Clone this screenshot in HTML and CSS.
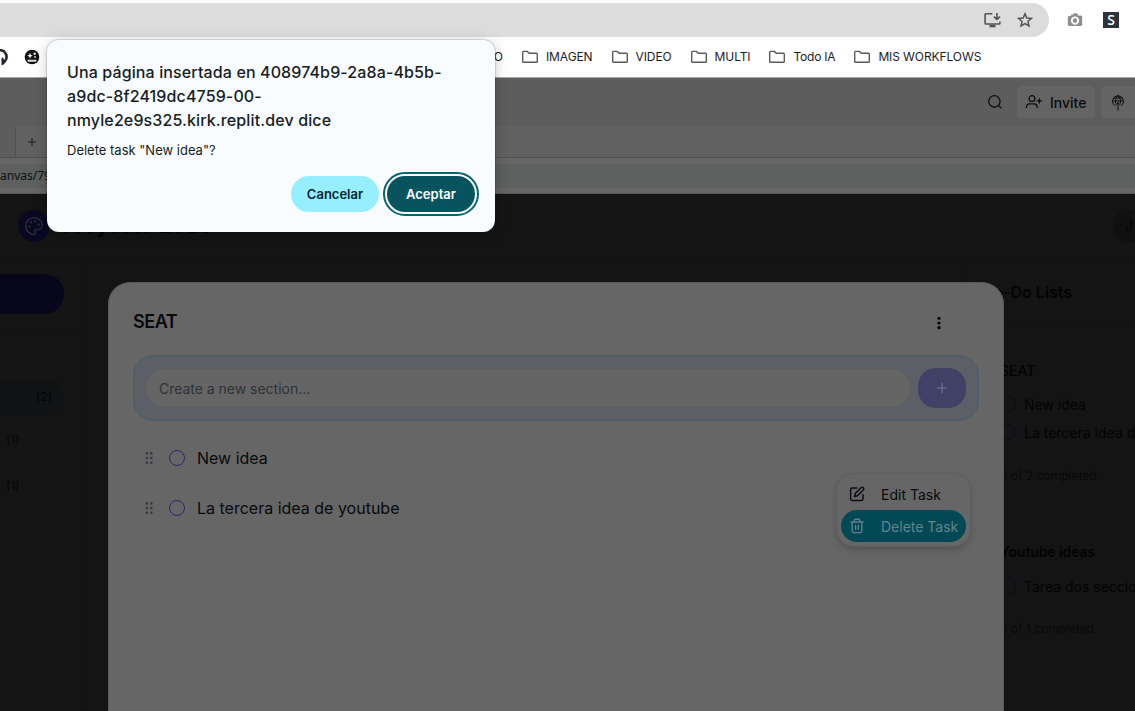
FILE: index.html
```html
<!DOCTYPE html>
<html lang="es">
<head>
<meta charset="utf-8">
<title>Canvas</title>
<link rel="stylesheet" href="styles.css">
</head>
<body>
<svg class="defs" width="0" height="0">
  <symbol id="folder" viewBox="0 0 18 14"><path d="M1.7 2.2Q1.7 1.4 2.5 1.4H6.4L8.2 3.2H15.5Q16.3 3.2 16.3 4V11.5Q16.3 12.3 15.5 12.3H2.5Q1.7 12.3 1.7 11.5Z" fill="none" stroke="#5a5a5a" stroke-width="1.4"/></symbol>
  <symbol id="grip" viewBox="0 0 8 14"><g fill="#363a44"><circle cx="1.9" cy="2.4" r="1.3"/><circle cx="6.3" cy="2.4" r="1.3"/><circle cx="1.9" cy="7.1" r="1.3"/><circle cx="6.3" cy="7.1" r="1.3"/><circle cx="1.9" cy="11.8" r="1.3"/><circle cx="6.3" cy="11.8" r="1.3"/></g></symbol>
</svg>

<div class="toolbar">
  <div class="omnibox">
    <svg width="18" height="16" viewBox="0 0 18 16" fill="none" stroke="#505357" stroke-width="1.6"><path d="M9.3 1.8H2.9Q2.1 1.8 2.1 2.6V11.2Q2.1 12 2.9 12H16.1Q16.9 12 16.9 11.2V9.5"/><path d="M6.5 14H12.5" stroke-width="2.6"/><path d="M13.9 1V7.2M10.9 4.6L13.9 7.5L16.9 4.6"/></svg>
    <svg width="16" height="16" viewBox="0 0 16 16" fill="none" stroke="#505357" stroke-width="1.5"><path d="M8 1.8L9.8 6L14.4 6.4L10.9 9.4L12 13.9L8 11.5L4 13.9L5.1 9.4L1.6 6.4L6.2 6Z"/></svg>
  </div>
  <svg class="ic-camera" width="16" height="14" viewBox="0 0 16 14"><path d="M2 3H4V1.6H6L7 .2H10.2L11.2 2.4H13.6Q15.2 2.4 15.2 4V11.6Q15.2 13 13.8 13H2.2Q.8 13 .8 11.6V4.2Q.8 3 2 3Z" fill="#8f8f8f"/><circle cx="8" cy="7.6" r="3.2" fill="none" stroke="#fff" stroke-width="1.9"/></svg>
  <span class="ext-s">S</span>
</div>

<div class="bookmarks">
  <svg class="ic-github" width="16" height="16" viewBox="0 0 16 16" fill="none" stroke="#24292f" stroke-width="2.6"><path d="M4 2Q8 0 12 2.4Q15.6 6 14.2 10Q13 12.8 10.8 14.4V11Q10.4 9.6 9.6 9.4"/></svg>
  <svg class="ic-face" width="16" height="16" viewBox="0 0 16 16"><circle cx="8" cy="8" r="7.3" fill="#111"/><path d="M6 3.8L6.8 6L9 6.8L6.8 7.6L6 9.8L5.2 7.6L3 6.8L5.2 6Z" fill="#fff"/><circle cx="10.7" cy="4.8" r="1.3" fill="#ddd"/><circle cx="11" cy="8" r="1.1" fill="#bbb"/><path d="M3.2 10.7H12.8L12 12.8H4Z" fill="#ddd"/></svg>
  <span class="bm-cut">AUDIO</span>
  <span class="bm"><svg width="18" height="14"><use href="#folder"/></svg><span>IMAGEN</span></span>
  <span class="bm"><svg width="18" height="14"><use href="#folder"/></svg><span>VIDEO</span></span>
  <span class="bm"><svg width="18" height="14"><use href="#folder"/></svg><span>MULTI</span></span>
  <span class="bm"><svg width="18" height="14"><use href="#folder"/></svg><span class="bm-todo">Todo IA</span></span>
  <span class="bm"><svg width="18" height="14"><use href="#folder"/></svg><span>MIS WORKFLOWS</span></span>
</div>

<div class="ide-head">
  <svg width="16" height="16" viewBox="0 0 16 16" fill="none" stroke="#0c0c0c" stroke-width="1.2"><circle cx="7.4" cy="7.4" r="5.7"/><path d="M11.5 11.5L14.4 14.4"/></svg>
  <div class="invite"><svg width="18" height="16" viewBox="0 0 18 16" fill="none" stroke="#0c0c0c" stroke-width="1.2"><circle cx="7" cy="4.6" r="2.9"/><path d="M1.5 14V13Q1.5 9.9 4.6 9.9H9.2Q12.2 9.9 12.2 13V14M11.6 6.9H17M14.3 4.2V9.6"/></svg><span>Invite</span></div>
  <div class="deploy"><svg width="14" height="17" viewBox="0 0 14 17" fill="none" stroke="#0c0c0c" stroke-width="1"><path d="M3.4 11.5A5.5 5.5 0 1 1 10.6 11.5M1.5 7H12.5M2.4 4H11.6M4.6 9.5Q3.4 5 7 1.2Q10.6 5 9.4 9.5M7 8.6V16.4M4.2 11.4L7 8.6L9.8 11.4"/></svg></div>
</div>
<div class="ide-tabs">
  <div class="tab-old"></div>
  <div class="tab-new"><svg width="10" height="10" viewBox="0 0 10 10" stroke="#222" stroke-width="1.1"><path d="M1 5H9M5 1V9"/></svg></div>
</div>
<div class="ide-url"><div class="url">anvas/79</div></div>

<main class="app">
  <header class="app-head">
    <span class="logo"><svg width="20" height="20" viewBox="0 0 24 24" fill="none" stroke="#29293a" stroke-width="1.9" stroke-linecap="round" stroke-linejoin="round"><circle cx="13.5" cy="6.5" r=".6"/><circle cx="17.5" cy="10.5" r=".6"/><circle cx="8.5" cy="7.5" r=".6"/><circle cx="6.5" cy="12.5" r=".6"/><path d="M12 2C6.5 2 2 6.5 2 12s4.5 10 10 10c.93 0 1.65-.75 1.65-1.69 0-.44-.18-.84-.44-1.13-.29-.29-.44-.65-.44-1.13a1.64 1.64 0 0 1 1.67-1.67h2c3.05 0 5.56-2.5 5.56-5.55C21.97 6.01 17.46 2 12 2z"/></svg></span>
    <h1>Proyecto 2025</h1>
    <span class="avatar">J</span>
  </header>
  <div class="app-body">
    <aside class="side">
      <div class="side-top"><div class="primary"></div></div>
      <div class="side-active">(2)</div>
      <div class="side-item">(1)</div>
      <div class="side-item">(1)</div>
    </aside>
    <div class="canvas"></div>
    <aside class="lists">
      <h2>To-Do Lists</h2>
      <section class="list first">
        <h3>SEAT</h3>
        <div class="todo"><i></i><span>New idea</span></div>
        <div class="todo"><i></i><span>La tercera idea de youtube</span></div>
        <p>0 of 2 completed</p>
      </section>
      <section class="list second">
        <h3>Youtube ideas</h3>
        <div class="todo"><i></i><span>Tarea dos seccion</span></div>
        <p>0 of 1 completed</p>
      </section>
    </aside>
  </div>
</main>

<section class="panel">
  <div class="panel-head"><h2>SEAT</h2><svg width="6" height="16" viewBox="0 0 6 16"><g fill="#050507"><circle cx="3" cy="3.3" r="1.6"/><circle cx="3" cy="8" r="1.6"/><circle cx="3" cy="12.7" r="1.6"/></g></svg></div>
  <div class="create">
    <div class="field">Create a new section...</div>
    <div class="add"><svg width="12" height="12" viewBox="0 0 12 12" stroke="#747492" stroke-width="1.2"><path d="M.7 6H11.3M6 .7V11.3"/></svg></div>
  </div>
  <div class="task"><svg width="8" height="14"><use href="#grip"/></svg><i></i><span>New idea</span></div>
  <div class="task"><svg width="8" height="14"><use href="#grip"/></svg><i></i><span>La tercera idea de youtube</span></div>
  <div class="menu">
    <div class="menu-item"><svg width="16" height="16" viewBox="0 0 16 16" fill="none" stroke="#0b0e14" stroke-width="1.45" stroke-linejoin="round" stroke-linecap="round"><path d="M7.8 2H3Q1.6 2 1.6 3.4V13Q1.6 14.4 3 14.4H12.6Q14 14.4 14 13V8.4"/><path d="M12.2 1.6Q13.2 .8 14.3 1.7Q15.2 2.8 14.4 3.8L8.4 9.8L5.6 10.5L6.2 7.6Z"/></svg><span>Edit Task</span></div>
    <div class="menu-item danger"><svg width="16" height="16" viewBox="0 0 16 16" fill="none" stroke="#5f8189" stroke-width="1.35" stroke-linejoin="round" stroke-linecap="round"><path d="M1.8 4H14.2M12.8 4V13.3Q12.8 14.6 11.5 14.6H4.5Q3.2 14.6 3.2 13.3V4M5.3 3.8V2.4Q5.3 1.2 6.5 1.2H9.5Q10.7 1.2 10.7 2.4V3.8M6.6 7.3V11.3M9.4 7.3V11.3"/></svg><span>Delete Task</span></div>
  </div>
</section>

<div class="dialog">
  <div class="dialog-title">Una página insertada en 408974b9-2a8a-4b5b-<br>a9dc-8f2419dc4759-00-<br>nmyle2e9s325.kirk.replit.dev dice</div>
  <div class="dialog-text">Delete task "New idea"?</div>
  <div class="dialog-actions"><button class="cancel">Cancelar</button><button class="accept">Aceptar</button></div>
</div>
</body>
</html>
```

FILE: styles.css
```css
* { box-sizing: border-box; }
body { margin: 0; width: 1135px; height: 711px; overflow: hidden; position: relative; display: flex; flex-direction: column; font-family: Inter, "Liberation Sans", sans-serif; background: #fff; }
svg { display: block; flex: none; }
.defs { position: absolute; }
h1, h2, h3, p { margin: 0; }
span, .url, .field { white-space: nowrap; }

.toolbar { height: 37px; flex: none; display: flex; align-items: center; padding-top: 3px; }
.omnibox { width: 1049px; height: 34px; background: #dcdcdc; border-radius: 0 17px 17px 0; display: flex; align-items: center; justify-content: flex-end; gap: 16px; padding-right: 16px; }
.ic-camera { margin-left: 18px; }
.ext-s { width: 16px; height: 16px; margin-left: 20px; background: #2d333d; color: #fff; font: 600 14px/16px "Open Sans", sans-serif; text-align: center; }

.bookmarks { height: 41px; flex: none; border-bottom: 1px solid #a6aaa8; display: flex; align-items: center; font-size: 12px; color: #1b1c1d; padding-bottom: 1px; }
.ic-github { margin-left: -8px; }
.ic-face { margin-left: 16px; }
.bm-cut { width: 463px; text-align: right; }
.bm { display: flex; align-items: center; gap: 7px; margin-left: 18px; letter-spacing: -.1px; }
.bm-todo { letter-spacing: -.22px; }

.ide-head { height: 48px; flex: none; background: #5d5d5d; display: flex; align-items: center; justify-content: flex-end; }
.invite, .deploy { height: 32px; background: #646464; display: flex; align-items: center; }
.invite { width: 78px; margin-left: 14px; border-radius: 4px; padding-left: 8px; gap: 7px; font-size: 14px; font-weight: 500; color: #0c0c0c; }
.deploy { width: 34px; margin-left: 6px; border-radius: 4px 0 0 4px; padding-left: 10px; }
.ide-tabs { height: 32px; flex: none; background: #616161; border-bottom: 1px solid #505050; display: flex; }
.tab-old { width: 16px; background: #5d5d5d; border-right: 1px solid #535353; }
.tab-new { display: flex; align-items: center; padding-left: 11px; }
.ide-url { height: 36px; flex: none; background: #656565; padding: 6px 0; border-bottom: 1px solid #575757; }
.url { height: 24px; background: #5d605f; font: 12px/24px "Noto Sans", sans-serif; color: #101010; }

.app { flex: 1; min-height: 0; background: #141414; display: flex; flex-direction: column; color: #030304; }
.app-head { height: 64px; flex: none; border-bottom: 1px solid #121212; display: flex; align-items: center; padding-left: 18px; }
.logo { width: 32px; height: 32px; border-radius: 50%; background: #0a0820; display: flex; align-items: center; justify-content: center; }
.app-head h1 { font-size: 20px; line-height: 28px; font-weight: 700; margin-left: 12px; flex: 1; letter-spacing: .55px; }
.avatar { width: 22px; height: 32px; background: #101010; border-radius: 16px 0 0 16px; font-size: 14px; line-height: 32px; padding-left: 12px; color: #050505; }
.app-body { flex: 1; min-height: 0; display: flex; }
.side { width: 81px; border-right: 1px solid #121212; font-size: 12px; color: #040506; }
.side-top { height: 73px; border-bottom: 1px solid #121212; padding-top: 16px; }
.primary { width: 64px; height: 40px; border-radius: 0 20px 20px 0; background: #07061b; }
.side-active { width: 64px; height: 36px; margin-top: 48px; background: #101214; border-radius: 0 18px 18px 0; line-height: 36px; padding-left: 36px; margin-bottom: 2px; }
.side-item { height: 46px; line-height: 46px; padding-left: 6px; }
.canvas { width: 886px; flex: none; }
.lists { flex: 1; min-width: 0; border-left: 1px solid #121212; }
.lists h2 { height: 69px; border-bottom: 1px solid #121212; font-size: 16px; font-weight: 600; line-height: 69px; padding-left: 16px; }
.list { padding-left: 32px; }
.list.first { padding-top: 33px; }
.list.second { padding-top: 57px; }
.list h3 { font-size: 14px; font-weight: 600; line-height: 22px; margin-bottom: 8px; letter-spacing: -.1px; }
.list.first h3 { font-weight: 500; letter-spacing: 0; }
.list.second h3 { margin-bottom: 9px; }
.todo { height: 28px; display: flex; align-items: center; gap: 8px; font-size: 14px; }
.todo i { width: 16px; height: 16px; border: 1px solid #0b0a26; border-radius: 50%; flex: none; }
.list p { font-size: 12px; line-height: 16px; margin-top: 22px; color: #080909; }
.list.second p { margin-top: 21px; }

.panel { position: absolute; left: 108px; top: 282px; width: 896px; height: 429px; background: #666; border-radius: 22px 22px 0 0; border: 1px solid #5b5b5e; border-bottom: 0; padding: 24px; }
.panel-head { height: 32px; display: flex; align-items: center; justify-content: space-between; padding-right: 37px; }
.panel-head h2 { font-size: 18px; line-height: 28px; font-weight: 600; letter-spacing: -.45px; color: #08090c; padding-bottom: 2px; }
.create { height: 66px; margin-top: 16px; border: 1px solid #4c5c70; border-radius: 20px; background: #5c6066; padding: 12px; display: flex; gap: 8px; align-items: center; }
.field { flex: 1; height: 38px; border-radius: 19px; background: #656565; font-size: 14px; line-height: 40px; padding-left: 13px; color: #2e3138; letter-spacing: -.02px; }
.add { width: 48px; height: 40px; border-radius: 18px; background: #414066; display: flex; align-items: center; justify-content: center; }
.task { height: 50px; display: flex; align-items: center; padding-left: 12px; font-size: 16px; color: #080a0e; }
.create + .task { margin-top: 12px; }
.task i { width: 16px; height: 16px; border: 1px solid #2c2868; border-radius: 50%; margin: 0 12px 0 16px; }
.menu { position: absolute; left: 727px; top: 190px; width: 135px; height: 74px; border: 1px solid #5b5f64; border-radius: 18px; background: #666; padding: 4px; box-shadow: 0 3px 6px rgba(0,0,0,.18); }
.menu-item { height: 32px; border-radius: 16px; display: flex; align-items: center; gap: 16px; padding-left: 8px; font-size: 14px; color: #080a0e; }
.menu-item.danger { background: #034955; color: #61858c; }

.dialog { position: absolute; left: 47px; top: 40px; width: 448px; height: 192px; border-radius: 12px; background: #f8fcff; box-shadow: 0 0 1px 1px rgba(0,0,0,.13), 0 2px 14px rgba(0,0,0,.22); padding: 20px; color: #171d1e; }
.dialog-title { font-size: 16px; font-weight: 500; line-height: 24px; white-space: nowrap; letter-spacing: .12px; }
.dialog-text { font-size: 13px; line-height: 20px; margin-top: 8px; }
.dialog-actions { display: flex; justify-content: flex-end; gap: 8px; margin-top: 16px; }
.dialog-actions button { width: 88px; height: 36px; border: 0; padding: 0; border-radius: 18px; font: 600 13px Inter, sans-serif; }
.cancel { background: #95efff; color: #07272d; }
.accept { background: #07535e; color: #fff; outline: 2px solid #07636e; outline-offset: 2px; }
```
